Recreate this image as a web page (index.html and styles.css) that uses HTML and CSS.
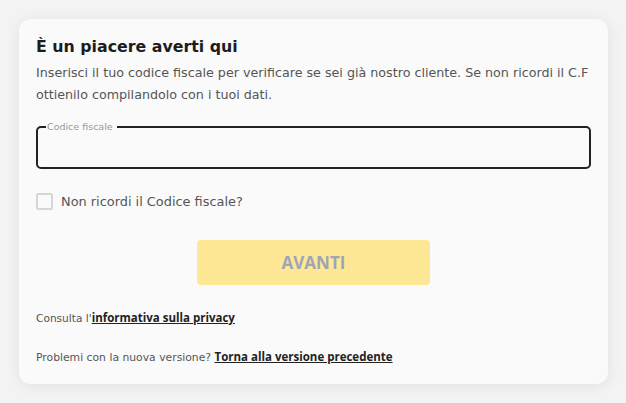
FILE: index.html
```html
<!DOCTYPE html>
<html lang="it">

<head>
    <meta charset="UTF-8">
    <meta name="viewport" content="width=device-width, initial-scale=1.0">
    <title>Verifica codice fiscale</title>
    <link rel="stylesheet" href="styles.css">
</head>

<body>
    <div class="card">
        <h1 class="titolo">È un piacere averti qui</h1>
        <p class="sottotitolo">Inserisci il tuo codice fiscale per verificare se sei già nostro cliente. Se non ricordi il C.F ottienilo compilandolo con i tuoi dati.</p>

        <fieldset class="campo">
            <legend>Codice fiscale</legend>
            <input type="text" class="campoInput">
        </fieldset>

        <label class="check">
            <span class="checkBox"></span>
            <span>Non ricordi il Codice fiscale?</span>
        </label>

        <div class="azioni">
            <button class="avanti" disabled>AVANTI</button>
        </div>

        <p class="nota">Consulta l'<a href="#">informativa sulla privacy</a></p>
        <p class="nota nota2">Problemi con la nuova versione? <a href="#">Torna alla versione precedente</a></p>
    </div>
</body>

</html>
```

FILE: styles.css
```css
body {
    font-family: 'DejaVu Sans', sans-serif;
    background-color: #f3f3f3;
    margin: 0;
    padding: 19px 18px 19px 19px;
}

.card {
    background-color: #fafafa;
    border-radius: 12px;
    box-shadow: 0px 2px 14px rgba(0, 0, 0, 0.08);
    padding: 16px 17px 20px 17px;
}

.titolo {
    font-size: 15.8px;
    font-weight: 700;
    color: #1d1d1d;
    margin: 0;
    line-height: 24px;
}

.sottotitolo {
    font-size: 12.7px;
    color: #555;
    line-height: 22px;
    margin: 3px 0 0 0;
}

.campo {
    border: 2px solid #222;
    border-radius: 5px;
    margin: 16px 0 0 0;
    padding: 0 8px;
    height: 47px;
    box-sizing: border-box;
}

.campo legend {
    font-size: 9.5px;
    color: #999;
    padding: 0 4px 0 1px;
    line-height: 10px;
}

.campoInput {
    border: none;
    background: transparent;
    outline: none;
    width: 100%;
}

.check {
    display: flex;
    align-items: center;
    gap: 8px;
    margin-top: 24px;
    font-size: 12.9px;
    color: #555;
}

.checkBox {
    width: 13px;
    height: 13px;
    border: 2px solid #d6d6d6;
    border-radius: 2px;
}

.azioni {
    display: flex;
    justify-content: center;
    margin-top: 30px;
}

.avanti {
    background-color: #fee795;
    border: none;
    border-radius: 4px;
    width: 233px;
    height: 45px;
    font-family: 'Open Sans', sans-serif;
    font-size: 17px;
    font-weight: 700;
    color: #9ea5b5;
}

.nota {
    font-size: 10.6px;
    color: #555;
    margin: 25px 0 0 0;
}

.nota2 {
    font-size: 10.8px;
    margin-top: 24px;
}

.nota a {
    color: #222;
    font-weight: 700;
    font-size: 11.5px;
    font-family: 'Open Sans', sans-serif;
}
```
